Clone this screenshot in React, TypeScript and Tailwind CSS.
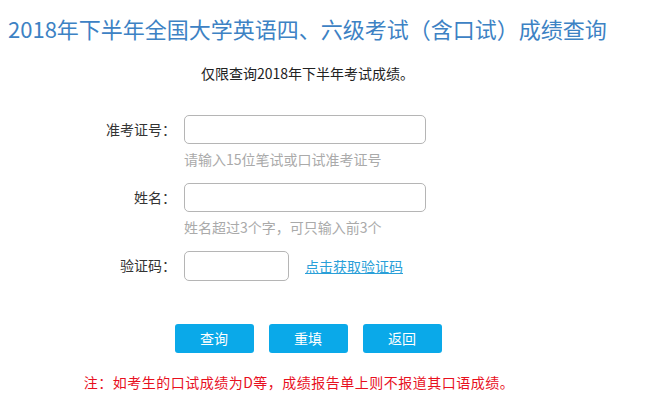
import React from "react";

const font = { fontFamily: '"Noto Sans CJK SC", "Noto Sans", sans-serif' };

function Row({ label, children, hint }: { label: string; children: React.ReactNode; hint?: string }) {
  return (
    <div className="flex items-start">
      <div className="w-[176px] h-[28px] flex items-center justify-end text-[14px] text-[#333]">{label}</div>
      <div className="ml-[8px] flex flex-col">
        <div className="flex items-center">{children}</div>
        {hint && <div className="mt-[5px] text-[14px] leading-[20px] text-[#aaa]">{hint}</div>}
      </div>
    </div>
  );
}

export default function App() {
  return (
    <div className="w-[655px] h-[413px] bg-white" style={font}>
      <h1 className="pl-[8px] pt-[13px] text-[22px] leading-[30px] text-[#3d82c4] font-normal">
        2018年下半年全国大学英语四、六级考试（含口试）成绩查询
      </h1>
      <p className="mt-[20px] text-center pr-[40px] text-[14px] leading-[20px] text-[#222]">仅限查询2018年下半年考试成绩。</p>
      <div className="mt-[32px] flex flex-col">
        <Row label="准考证号：" hint="请输入15位笔试或口试准考证号">
          <input className="w-[242px] h-[29px] border border-[#b5b5b5] rounded-[5px] outline-none px-2" />
        </Row>
        <div className="h-[14px]" />
        <Row label="姓名：" hint="姓名超过3个字，可只输入前3个">
          <input className="w-[242px] h-[29px] border border-[#b5b5b5] rounded-[5px] outline-none px-2" />
        </Row>
        <div className="h-[14px]" />
        <Row label="验证码：">
          <input className="w-[105px] h-[30px] border border-[#b5b5b5] rounded-[5px] outline-none px-2" />
          <a className="ml-[16px] text-[14px] text-[#2a9fd8] underline">点击获取验证码</a>
        </Row>
      </div>
      <div className="mt-[43px] flex justify-center gap-[15px] pr-[39px]">
        {["查询", "重填", "返回"].map((t) => (
          <button key={t} className="w-[79px] h-[29px] rounded-[3px] bg-[#0aa9e9] text-white text-[14px]">{t}</button>
        ))}
      </div>
      <p className="mt-[19px] text-center pr-[57px] text-[14px] leading-[20px] tracking-[0.5px] text-[#e8101e]">
        注：如考生的口试成绩为D等，成绩报告单上则不报道其口语成绩。
      </p>
    </div>
  );
}
